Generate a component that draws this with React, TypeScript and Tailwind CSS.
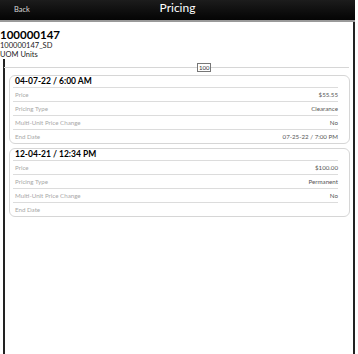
import React from "react";

type Row = { label: string; value: string };
type Entry = { title: string; rows: Row[] };

const entries: Entry[] = [
  {
    title: "04-07-22 / 6:00 AM",
    rows: [
      { label: "Price", value: "$55.55" },
      { label: "Pricing Type", value: "Clearance" },
      { label: "Multi-Unit Price Change", value: "No" },
      { label: "End Date", value: "07-25-22 / 7:00 PM" },
    ],
  },
  {
    title: "12-04-21 / 12:34 PM",
    rows: [
      { label: "Price", value: "$100.00" },
      { label: "Pricing Type", value: "Permanent" },
      { label: "Multi-Unit Price Change", value: "No" },
      { label: "End Date", value: "" },
    ],
  },
];

function Card({ entry }: { entry: Entry }) {
  return (
    <div className="ml-[4px] mr-[3px] rounded-[6px] border border-[#d6d6d6] pl-[3px] pr-[11px]">
      <div className="h-[11px] pl-[2px] text-[8.5px] font-bold leading-[11px] text-black">{entry.title}</div>
      {entry.rows.map((r, i) => (
        <div
          key={i}
          className="flex h-[14px] items-center justify-between border-t border-[#dcdcdc] pl-[2px] text-[6.2px] leading-[13px]"
        >
          <span className="text-[#a8a8a8]">{r.label}</span>
          <span className="text-[#555]">{r.value}</span>
        </div>
      ))}
    </div>
  );
}

export default function App() {
  return (
    <div
      className="flex h-[354px] w-[358px] flex-col bg-white"
      style={{ fontFamily: 'Lato, "Open Sans", sans-serif' }}
    >
      <div className="relative flex h-[22px] w-[355px] items-center border-b-[2px] border-[#9a9a9a] bg-gradient-to-b from-[#1c1c1c] to-[#050505]">
        <span className="pl-[14px] text-[7.5px] text-[#d8d8d8]">Back</span>
        <span className="absolute left-0 right-0 top-[0px] text-center text-[12px] leading-[15px] text-white">
          Pricing
        </span>
      </div>
      <div className="flex w-[355px] flex-1 flex-col border-r-[2px] border-[#222]">
        <div className="pt-[6px]">
          <div className="text-[11.5px] font-bold leading-[13px] text-black">100000147</div>
          <div className="text-[7.5px] leading-[9px] text-[#222]">100000147_SD</div>
        </div>
        <div className="flex flex-1 flex-col">
          <div className="text-[7.5px] leading-[9px] text-[#222]">UOM Units</div>
          <div className="ml-[3px] flex flex-1 flex-col border-l-[2px] border-[#222]">
            <div className="relative h-[12px]">
              <div className="absolute left-[-1px] right-[4px] top-[8px] border-t border-[#d6d6d6]"></div>
              <div className="absolute left-[192px] top-[4px] h-[9px] border border-[#777] bg-white px-[1px] text-[6px] leading-[7px] text-[#333]">
                100
              </div>
            </div>
            <div className="mt-[4px] flex flex-col gap-[4px]">
              {entries.map((e, i) => (
                <Card key={i} entry={e} />
              ))}
            </div>
          </div>
        </div>
      </div>
    </div>
  );
}
